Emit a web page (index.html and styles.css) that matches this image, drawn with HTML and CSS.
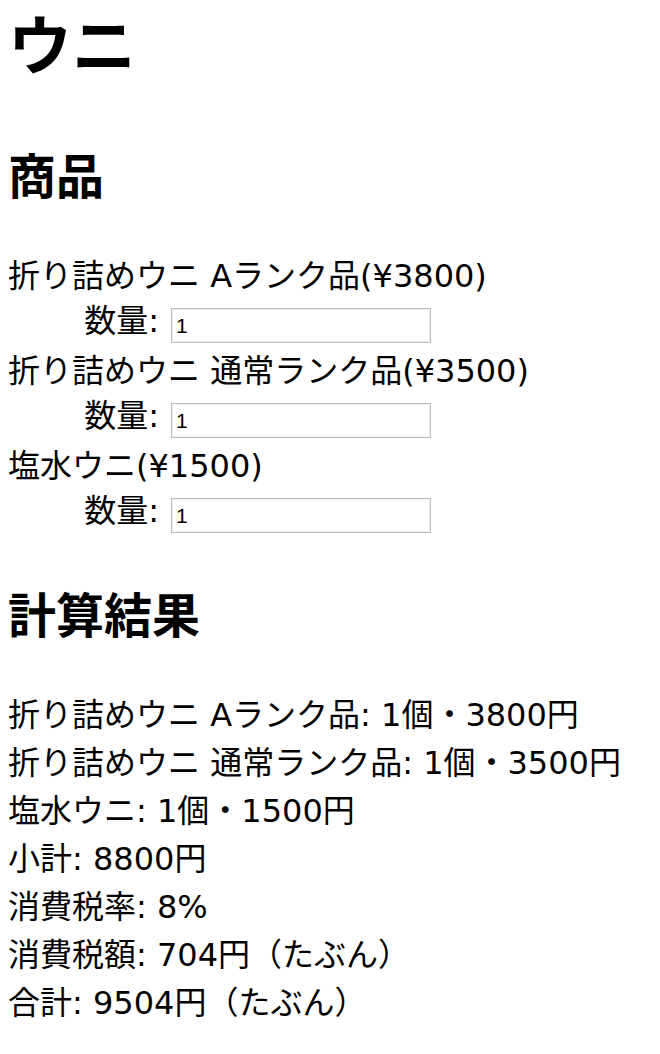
FILE: index.html
```html
<!DOCTYPE html>
<html lang="ja">
<head>
<meta charset="utf-8">
<title>ウニ</title>
<link rel="stylesheet" href="styles.css">
</head>
<body>
<h1 class="title">ウニ</h1>
<h2 class="section">商品</h2>
<div class="products">
  <div class="product">
    <div class="product-name">折り詰めウニ Aランク品(¥3800)</div>
    <div class="qty-row"><label class="qty-label">数量:</label><input class="qty-input" type="text" value="1"></div>
  </div>
  <div class="product">
    <div class="product-name">折り詰めウニ 通常ランク品(¥3500)</div>
    <div class="qty-row"><label class="qty-label">数量:</label><input class="qty-input" type="text" value="1"></div>
  </div>
  <div class="product">
    <div class="product-name">塩水ウニ(¥1500)</div>
    <div class="qty-row"><label class="qty-label">数量:</label><input class="qty-input" type="text" value="1"></div>
  </div>
</div>
<h2 class="section">計算結果</h2>
<div class="results">
  <div class="result">折り詰めウニ Aランク品: 1個・3800円</div>
  <div class="result">折り詰めウニ 通常ランク品: 1個・3500円</div>
  <div class="result">塩水ウニ: 1個・1500円</div>
  <div class="result">小計: 8800円</div>
  <div class="result">消費税率: 8%</div>
  <div class="result">消費税額: 704円（たぶん）</div>
  <div class="result">合計: 9504円（たぶん）</div>
</div>
</body>
</html>
```

FILE: styles.css
```css
html, body {
  background: #ffffff;
}
body {
  margin: 0 8px;
  color: #000000;
  font-family: "DejaVu Sans", "Noto Sans CJK JP", sans-serif;
  font-size: 32px;
  line-height: 48px;
}
.title {
  margin: 0 0 47px;
  font-size: 64px;
  line-height: 94px;
  font-weight: 700;
}
.section {
  margin: 39px 0;
  font-size: 48px;
  line-height: 72px;
  font-weight: 700;
}
.products {
  margin-bottom: 43px;
}
.product-name {
  height: 48px;
  white-space: nowrap;
}
.qty-row {
  display: flex;
  align-items: flex-start;
  height: 47px;
}
.qty-label {
  width: 151px;
  text-align: right;
  line-height: 43px;
  margin-right: 12px;
}
.qty-input {
  box-sizing: border-box;
  margin: 8px 0 0;
  width: 260px;
  height: 35px;
  padding: 2px 4px;
  border: 1px solid #bdbdbd;
  box-shadow: inset 0 0 0 1px #efefef;
  border-radius: 0;
  background: #ffffff;
  font-family: "Liberation Sans", sans-serif;
  font-size: 21px;
  color: #000000;
  outline: none;
}
.result {
  white-space: nowrap;
}
```
